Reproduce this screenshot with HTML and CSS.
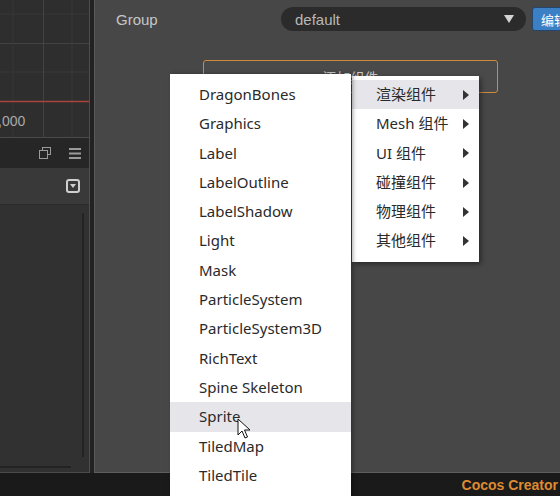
FILE: index.html
```html
<!DOCTYPE html>
<html lang="zh">
<head>
    <meta charset="UTF-8">
    <title>Cocos Creator - 添加组件</title>
    <link rel="stylesheet" href="styles.css">
</head>
<body>
    <div class="app">
        <div class="main">
            <div class="left-panel">
                <div class="curve-view">
                    <svg width="89" height="137" viewBox="0 0 89 137">
                        <rect width="89" height="137" fill="#2e2e2e"/>
                        <line x1="0" y1="14" x2="89" y2="14" stroke="#363636"/>
                        <line x1="0" y1="43.5" x2="89" y2="43.5" stroke="#434343"/>
                        <line x1="0" y1="72" x2="89" y2="72" stroke="#383838"/>
                        <line x1="13" y1="0" x2="13" y2="137" stroke="#363636"/>
                        <line x1="43.5" y1="0" x2="43.5" y2="137" stroke="#434343"/>
                        <line x1="72" y1="0" x2="72" y2="137" stroke="#383838"/>
                        <line x1="0" y1="101.5" x2="89" y2="101.5" stroke="#a8443c" stroke-width="1.5"/>
                        <text x="-2" y="126" fill="#a9a9a9" font-family="Liberation Sans, Arial, sans-serif" font-size="14">,000</text>
                    </svg>
                </div>
                <div class="panel-toolbar">
                    <svg class="tool-icon" width="12" height="12" viewBox="0 0 12 12">
                        <rect x="3.5" y="0.5" width="8" height="7" fill="none" stroke="#9a9a9a"/>
                        <rect x="0.5" y="3.5" width="8" height="8" fill="#262626" stroke="#9a9a9a"/>
                    </svg>
                    <svg class="tool-icon" width="12" height="11" viewBox="0 0 12 11">
                        <rect x="0" y="0" width="12" height="2" fill="#9a9a9a"/>
                        <rect x="0" y="4.5" width="12" height="2" fill="#9a9a9a"/>
                        <rect x="0" y="9" width="12" height="2" fill="#9a9a9a"/>
                    </svg>
                </div>
                <div class="panel-header">
                    <svg width="14" height="14" viewBox="0 0 14 14">
                        <rect x="1" y="1" width="12" height="12" rx="2" fill="none" stroke="#cfcfcf" stroke-width="2"/>
                        <path d="M4 5 L10 5 L7 9 Z" fill="#cfcfcf"/>
                    </svg>
                </div>
                <div class="panel-content">
                    <div class="scroll-v"></div>
                    <div class="scroll-h"></div>
                </div>
            </div>
            <div class="splitter"></div>
            <div class="inspector">
                <div class="prop-row">
                    <span class="prop-label">Group</span>
                    <div class="select">
                        <span>default</span>
                        <span class="select-arrow"></span>
                    </div>
                    <button class="btn-blue">编辑</button>
                </div>
                <button class="btn-add">添加组件</button>

                <ul class="menu menu-main">
                    <li>DragonBones</li>
                    <li>Graphics</li>
                    <li>Label</li>
                    <li>LabelOutline</li>
                    <li>LabelShadow</li>
                    <li>Light</li>
                    <li>Mask</li>
                    <li>ParticleSystem</li>
                    <li>ParticleSystem3D</li>
                    <li>RichText</li>
                    <li>Spine Skeleton</li>
                    <li class="hover">Sprite</li>
                    <li>TiledMap</li>
                    <li>TiledTile</li>
                </ul>
                <ul class="menu menu-cat">
                    <li class="hover">渲染组件<span class="sub-arrow"></span></li>
                    <li>Mesh 组件<span class="sub-arrow"></span></li>
                    <li>UI 组件<span class="sub-arrow"></span></li>
                    <li>碰撞组件<span class="sub-arrow"></span></li>
                    <li>物理组件<span class="sub-arrow"></span></li>
                    <li>其他组件<span class="sub-arrow"></span></li>
                </ul>
                <svg class="cursor" width="14" height="22" viewBox="0 0 14 22">
                    <path d="M1 1 L1 17 L5 13 L8 20 L10.5 19 L7.5 12 L13 12 Z" fill="#fff" stroke="#111" stroke-width="1"/>
                </svg>
            </div>
        </div>
        <div class="statusbar">
            <span class="brand">Cocos Creator</span>
        </div>
    </div>
</body>
</html>
```

FILE: styles.css
```css
html, body {
    margin: 0;
    padding: 0;
}
body {
    width: 560px;
    height: 496px;
    overflow: hidden;
    background-color: #1b1b1b;
    font-family: "Liberation Sans", Arial, "Noto Sans CJK SC", sans-serif;
}
.app {
    display: flex;
    flex-direction: column;
    height: 496px;
}
.main {
    display: flex;
    height: 473px;
}
.left-panel {
    flex-shrink: 0;
    width: 89px;
    border-right: 1px solid #4e4e4e;
    display: flex;
    flex-direction: column;
    background-color: #2a2a2a;
}
.curve-view {
    height: 137px;
    border-bottom: 1px solid #4a4a4a;
}
.curve-view svg {
    display: block;
}
.panel-toolbar {
    height: 30px;
    background-color: #262626;
    display: flex;
    align-items: center;
    justify-content: flex-end;
    gap: 18px;
    padding-right: 8px;
}
.panel-header {
    height: 36px;
    background-color: #393939;
    border-bottom: 1px solid #2a2a2a;
    display: flex;
    align-items: center;
    justify-content: flex-end;
    padding-right: 9px;
}
.panel-header svg {
    display: block;
}
.panel-content {
    flex: 1;
    background-color: #313131;
    border-bottom: 1px solid #4a4a4a;
    position: relative;
}
.scroll-v {
    position: absolute;
    left: 82px;
    top: 8px;
    width: 2px;
    height: 244px;
    background-color: #232323;
}
.scroll-h {
    position: absolute;
    left: 0;
    bottom: 4px;
    width: 71px;
    height: 2px;
    background-color: #232323;
}
.splitter {
    flex-shrink: 0;
    width: 4px;
    background-color: #222;
}
.inspector {
    flex: 1;
    min-width: 0;
    position: relative;
    background-color: #474747;
    border-left: 1px solid #5a5a5a;
    border-bottom: 1px solid #5e5e5e;
}
.prop-row {
    display: grid;
    grid-template-columns: 159px 245px 40px;
    gap: 6px;
    align-items: center;
    padding: 7px 0 0 21px;
}
.prop-label {
    color: #c6c6c6;
    font-size: 15px;
}
.select {
    height: 24px;
    border-radius: 12px;
    background-color: #2b2b2b;
    box-sizing: border-box;
    display: flex;
    align-items: center;
    justify-content: space-between;
    padding: 0 12px 0 14px;
    color: #b8b8b8;
    font-size: 15px;
}
.select-arrow {
    width: 0;
    height: 0;
    border-left: 5px solid transparent;
    border-right: 5px solid transparent;
    border-top: 8px solid #d4d4d4;
}
.btn-blue {
    height: 24px;
    border: 1px solid #24466d;
    border-radius: 3px;
    background-color: #3b7fc4;
    color: #fff;
    font-size: 13px;
    text-align: left;
    padding: 0 0 0 8px;
    font-family: "Noto Sans CJK SC", sans-serif;
}
.btn-add {
    display: block;
    margin: 29px 0 0 108px;
    width: 295px;
    height: 33px;
    border: 1px solid #cf8a3d;
    border-radius: 3px;
    background-color: #4a4a4a;
    color: #c9c9c9;
    font-size: 14px;
    font-family: "Noto Sans CJK SC", sans-serif;
}
.menu {
    position: absolute;
    margin: 0;
    list-style: none;
    background-color: #fff;
    font-family: "Noto Sans", "Noto Sans CJK SC", sans-serif;
    font-size: 15px;
    color: #2a2a2a;
}
.menu li {
    height: 29.3px;
    line-height: 29.3px;
    white-space: nowrap;
}
.menu li.hover {
    background-color: #e6e6ea;
}
.menu-main {
    left: 75px;
    top: 74px;
    width: 181px;
    height: 430px;
    padding: 6px 0 0;
    z-index: 2;
    box-shadow: 2px 0 4px rgba(0, 0, 0, 0.35);
}
.menu-main li {
    padding-left: 29px;
}
.menu-cat {
    left: 257px;
    top: 76px;
    width: 127px;
    padding: 4px 0 6px;
    z-index: 1;
    box-shadow: 2px 2px 5px rgba(0, 0, 0, 0.45);
}
.menu-cat li {
    padding-left: 24px;
    padding-right: 10px;
    display: flex;
    align-items: center;
    justify-content: space-between;
}
.sub-arrow {
    width: 0;
    height: 0;
    border-top: 5px solid transparent;
    border-bottom: 5px solid transparent;
    border-left: 6px solid #333;
}
.cursor {
    position: absolute;
    left: 142px;
    top: 418px;
    z-index: 3;
}
.statusbar {
    flex: 1;
    background-color: #1a1a1a;
    display: flex;
    align-items: center;
    justify-content: flex-end;
    padding-right: 2px;
}
.brand {
    color: #dd8a32;
    font-size: 14px;
    font-weight: bold;
}
```
